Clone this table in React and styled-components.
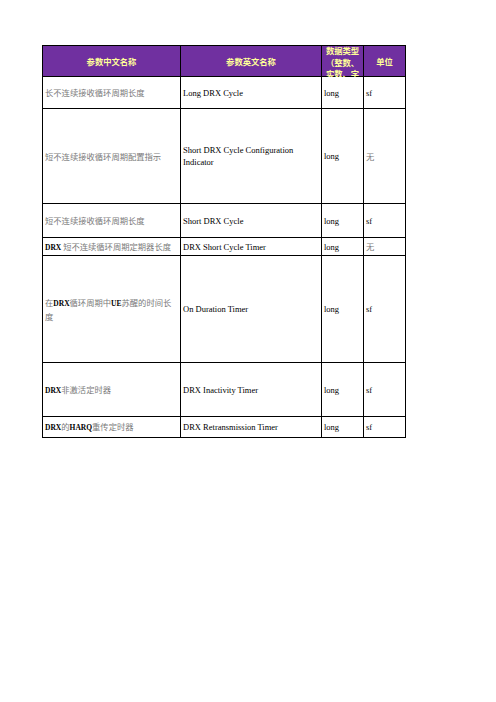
import React from 'react';
import styled, { createGlobalStyle } from 'styled-components';

const GlobalStyle = createGlobalStyle`
    html, body {
        margin: 0;
        padding: 0;
        background: #fff;
    }
`;

const Page = styled.div`
    width: 496px;
    height: 702px;
    padding: 45px 0 0 42px;
    box-sizing: border-box;
`;

const Sheet = styled.table`
    border-collapse: collapse;
    table-layout: fixed;
    width: 363px;
    font-family: 'Liberation Serif', 'Noto Sans CJK SC', serif;
`;

const HeadCell = styled.th`
    background-color: #7030a0;
    border: 1px solid #000;
    color: #ffff99;
    font-family: 'Noto Sans CJK SC', sans-serif;
    font-size: 8.3px;
    font-weight: bold;
    padding: 0 1px;
    vertical-align: top;
    text-align: center;
`;

// 글자가 넘치면 잘라냄 (엑셀처럼)
const HeadText = styled.div`
    height: ${(p) => (p.$wrap ? '32px' : '30px')};
    margin: ${(p) => (p.$wrap ? '-1px 0 -2px' : '0')};
    line-height: ${(p) => (p.$wrap ? '11.5px' : '30px')};
    overflow: hidden;
`;

const Row = styled.tr`
    height: ${(p) => p.$h}px;
`;

const Cell = styled.td`
    border: 1px solid #000;
    padding: 0 2px 0 2px;
    vertical-align: middle;
    font-size: 8.5px;
    line-height: 12px;
    color: #000;
`;

const Zh = styled.span`
    font-family: 'Noto Sans CJK SC', sans-serif;
    font-size: 8.3px;
    line-height: 12px;
    color: #7a7a7a;
`;

const Latin = styled.span`
    font-family: 'Liberation Serif', serif;
    font-size: 7.5px;
    line-height: 12px;
    font-weight: bold;
    color: #000;
`;

const rows = [
    { h: 32, zh: [['长不连续接收循环周期长度']], en: 'Long DRX Cycle', type: 'long', unit: 'sf' },
    {
        h: 95,
        zh: [['短不连续接收循环周期配置指示']],
        en: 'Short DRX Cycle Configuration Indicator',
        type: 'long',
        unit: '无',
    },
    { h: 34, zh: [['短不连续接收循环周期长度']], en: 'Short DRX Cycle', type: 'long', unit: 'sf' },
    {
        h: 18,
        zh: [['DRX ', true], ['短不连续循环周期定期器长度']],
        en: 'DRX Short Cycle Timer',
        type: 'long',
        unit: '无',
    },
    {
        h: 107,
        zh: [['在'], ['DRX', true], ['循环周期中'], ['UE', true], ['苏醒的时间长度']],
        en: 'On Duration Timer',
        type: 'long',
        unit: 'sf',
    },
    {
        h: 54,
        zh: [['DRX', true], ['非激活定时器']],
        en: 'DRX Inactivity Timer',
        type: 'long',
        unit: 'sf',
    },
    {
        h: 21,
        zh: [['DRX', true], ['的'], ['HARQ', true], ['重传定时器']],
        en: 'DRX Retransmission Timer',
        type: 'long',
        unit: 'sf',
    },
];

const App = () => {
    return (
        <>
            <GlobalStyle />
            <Page>
                <Sheet>
                    <colgroup>
                        <col style={{ width: 138 }} />
                        <col style={{ width: 141 }} />
                        <col style={{ width: 42 }} />
                        <col style={{ width: 42 }} />
                    </colgroup>
                    <thead>
                        <Row $h={31}>
                            <HeadCell>
                                <HeadText>参数中文名称</HeadText>
                            </HeadCell>
                            <HeadCell>
                                <HeadText>参数英文名称</HeadText>
                            </HeadCell>
                            <HeadCell>
                                <HeadText $wrap>数据类型（整数、实数、字符串）</HeadText>
                            </HeadCell>
                            <HeadCell>
                                <HeadText>单位</HeadText>
                            </HeadCell>
                        </Row>
                    </thead>
                    <tbody>
                        {rows.map((r, i) => (
                            <Row key={i} $h={r.h}>
                                <Cell>
                                    {r.zh.map(([t, latin], j) =>
                                        latin ? (
                                            <Latin key={j}>{t}</Latin>
                                        ) : (
                                            <Zh key={j}>{t}</Zh>
                                        )
                                    )}
                                </Cell>
                                <Cell>{r.en}</Cell>
                                <Cell>{r.type}</Cell>
                                <Cell>
                                    {r.unit === '无' ? <Zh>{r.unit}</Zh> : r.unit}
                                </Cell>
                            </Row>
                        ))}
                    </tbody>
                </Sheet>
            </Page>
        </>
    );
};

export default App;
